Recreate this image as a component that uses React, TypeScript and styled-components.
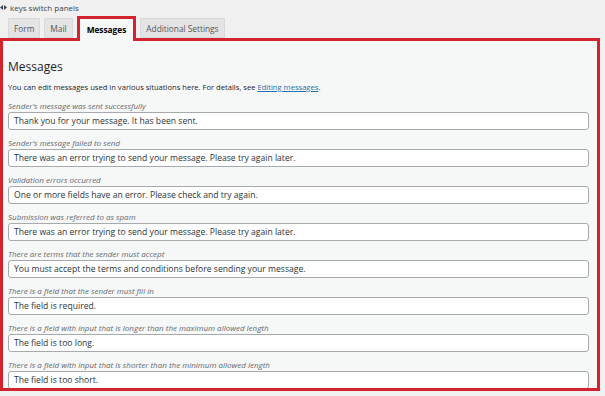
import React from "react";
import styled, { createGlobalStyle } from "styled-components";

const GlobalStyle = createGlobalStyle`
  html, body {
    margin: 0;
    padding: 0;
    background: #f0f0f1;
    font-family: "Open Sans", "Noto Sans", sans-serif;
    color: #1d2327;
  }
`;

const RED = "#d3232e";

type TMessage = {
  label: string;
  value: string;
};

const messages: TMessage[] = [
  { label: "Sender's message was sent successfully", value: "Thank you for your message. It has been sent." },
  { label: "Sender's message failed to send", value: "There was an error trying to send your message. Please try again later." },
  { label: "Validation errors occurred", value: "One or more fields have an error. Please check and try again." },
  { label: "Submission was referred to as spam", value: "There was an error trying to send your message. Please try again later." },
  { label: "There are terms that the sender must accept", value: "You must accept the terms and conditions before sending your message." },
  { label: "There is a field that the sender must fill in", value: "The field is required." },
  { label: "There is a field with input that is longer than the maximum allowed length", value: "The field is too long." },
  { label: "There is a field with input that is shorter than the minimum allowed length", value: "The field is too short." },
];

const tabs = ["Form", "Mail", "Messages", "Additional Settings"];

const App = () => {
  return (
    <>
      <GlobalStyle />
      <Page>
        <Caption>
          <svg width="7" height="5" viewBox="0 0 7 5">
            <path d="M0 2.5 L3 0 V5 Z M7 2.5 L4 0 V5 Z" fill="#3c434a" />
          </svg>
          keys switch panels
        </Caption>
        <TabBar>
          {tabs.map(tab => (
            <Tab key={"tab_" + tab} active={tab === "Messages"}>{tab}</Tab>
          ))}
        </TabBar>
        <Panel>
          <Heading>Messages</Heading>
          <Intro>
            You can edit messages used in various situations here. For details, see <Link>Editing messages</Link>.
          </Intro>
          {messages.map((message, i) => (
            <Field key={"message_" + i}>
              <Label>{message.label}</Label>
              <TextInput type="text" defaultValue={message.value} />
            </Field>
          ))}
        </Panel>
      </Page>
    </>
  );
};

const Page = styled.div`
  width: 605px;
  height: 396px;
  overflow: hidden;
  padding-right: 5px;
  box-sizing: border-box;
`;

const Caption = styled.div`
  display: flex;
  align-items: center;
  gap: 3px;
  height: 14px;
  font-size: 8px;
  color: #3c434a;
`;

const TabBar = styled.div`
  display: flex;
  align-items: flex-end;
  gap: 4px;
  height: 24px;
  padding-left: 8px;
  position: relative;
  z-index: 1;
`;

const Tab = styled.div<{ active?: boolean }>`
  box-sizing: border-box;
  display: flex;
  align-items: center;
  height: ${props => (props.active ? "25px" : "20px")};
  margin-bottom: ${props => (props.active ? "-3px" : "0")};
  padding: ${props => (props.active ? "0 7px 2px" : "0 5px")};
  background: ${props => (props.active ? "#f6f7f7" : "#e4e4e4")};
  border: ${props => (props.active ? `3px solid ${RED}` : "1px solid #d9d9d9")};
  border-bottom: ${props => (props.active ? "none" : "1px solid #d9d9d9")};
  font-size: 8.3px;
  font-weight: ${props => (props.active ? 700 : 400)};
  color: ${props => (props.active ? "#000" : "#50575e")};
`;

const Panel = styled.div`
  box-sizing: border-box;
  height: 353px;
  border: 3px solid ${RED};
  background: #f6f7f7;
  padding: 18px 8px 0 5px;
  overflow: hidden;
`;

const Heading = styled.h2`
  margin: 0;
  font-size: 12px;
  line-height: 16px;
  font-weight: 400;
  color: #1d2327;
`;

const Intro = styled.p`
  margin: 7px 0 8px;
  font-size: 7.6px;
  line-height: 11px;
  color: #1d2327;
`;

const Link = styled.a`
  color: #2271b1;
  text-decoration: underline;
`;

const Field = styled.div`
  display: flex;
  flex-direction: column;
  gap: 1px;
  margin-bottom: 8px;
`;

const Label = styled.span`
  font-size: 8px;
  line-height: 10px;
  font-style: italic;
  color: #646970;
`;

const TextInput = styled.input`
  box-sizing: border-box;
  width: 100%;
  height: 18px;
  padding: 0 5px;
  border: 1px solid #a7aaad;
  border-radius: 3px;
  background: #fff;
  font-family: "Open Sans", "Noto Sans", sans-serif;
  font-size: 8.6px;
  color: #2c3338;
  outline: none;
`;

export default App;
